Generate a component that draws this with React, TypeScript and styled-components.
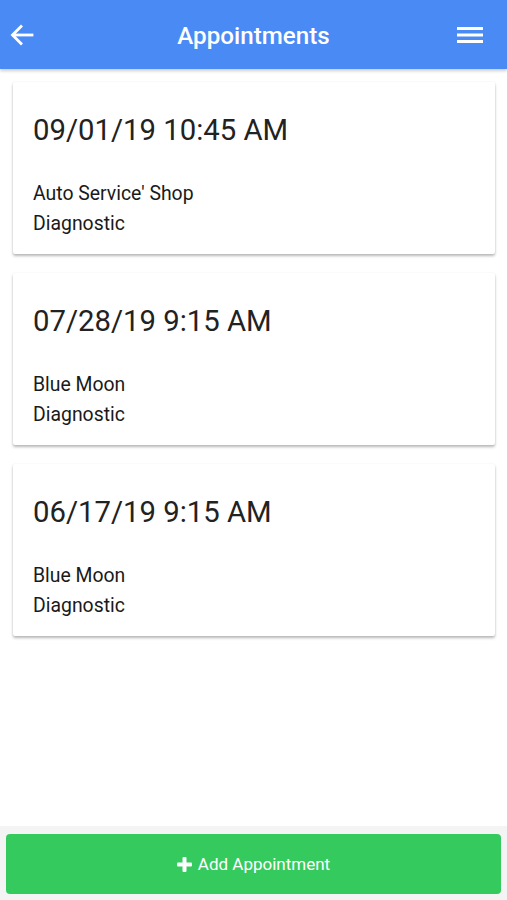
import styled, { createGlobalStyle } from "styled-components";

const GlobalStyle = createGlobalStyle`
  * { box-sizing: border-box; }
  html, body { margin: 0; padding: 0; }
  body {
    font-family: Roboto, "Noto Sans", "Liberation Sans", sans-serif;
    background: #fff;
  }
`;

const Screen = styled.div`
  height: 100vh;
  display: flex;
  flex-direction: column;
  background: #fff;
`;

const Header = styled.header`
  height: 69px;
  flex-shrink: 0;
  background: #4a8af5;
  display: flex;
  align-items: center;
  justify-content: space-between;
  padding: 2px 24px 0 10px;
  box-shadow: 0 2px 3px rgba(0, 0, 0, 0.2);
  position: relative;
  z-index: 1;
`;

const Title = styled.h1`
  margin: 0;
  flex: 1;
  text-align: center;
  color: #fff;
  font-size: 24.2px;
  font-weight: 500;
  padding-left: 16px;
`;

const IconButton = styled.button`
  background: none;
  border: 0;
  padding: 0;
  display: flex;
  align-items: center;
  justify-content: center;
  margin-top: -2px;
`;

const List = styled.main`
  flex: 1;
  display: flex;
  flex-direction: column;
  gap: 19px;
  padding: 13px 12px 13px 13px;
  overflow: hidden;
`;

const Card = styled.div`
  background: #fff;
  border-radius: 2px;
  padding: 29px 20px 15px;
  box-shadow: 0 2px 3px rgba(0, 0, 0, 0.28), 0 0 2px rgba(0, 0, 0, 0.06);
`;

const DateText = styled.div`
  font-size: 29.3px;
  line-height: 38px;
  color: #222;
  margin-bottom: 30px;
`;

const Line = styled.div`
  font-size: 19.4px;
  line-height: 30px;
  color: #1a1a1a;
`;

const Footer = styled.footer`
  flex-shrink: 0;
  background: #f4f4f4;
  padding: 8px 6px 6px;
`;

const AddButton = styled.button`
  width: 100%;
  height: 60px;
  border: 0;
  border-radius: 4px;
  background: #35ca5e;
  color: #fff;
  font-family: Roboto, "Noto Sans", sans-serif;
  font-size: 17px;
  display: flex;
  align-items: center;
  justify-content: center;
  gap: 6px;
`;

const appointments = [
  { id: 1, date: "09/01/19 10:45 AM", shop: "Auto Service' Shop", service: "Diagnostic" },
  { id: 2, date: "07/28/19 9:15 AM", shop: "Blue Moon", service: "Diagnostic" },
  { id: 3, date: "06/17/19 9:15 AM", shop: "Blue Moon", service: "Diagnostic" },
];

function BackIcon() {
  return (
    <svg width="24" height="22" viewBox="0 0 24 22" fill="none" stroke="#fff" strokeWidth="2.8" strokeLinecap="square">
      <path d="M22 11H3.5" />
      <path d="M11 2.5L2.5 11l8.5 8.5" />
    </svg>
  );
}

function MenuIcon() {
  return (
    <svg width="26" height="18" viewBox="0 0 26 18" fill="#fff">
      <rect x="0" y="1" width="26" height="3" />
      <rect x="0" y="7.5" width="26" height="3" />
      <rect x="0" y="14" width="26" height="3" />
    </svg>
  );
}

function PlusIcon() {
  return (
    <svg width="15" height="15" viewBox="0 0 15 15" fill="#fff">
      <rect x="5.5" y="0" width="4" height="15" rx="1" />
      <rect x="0" y="5.5" width="15" height="4" rx="1" />
    </svg>
  );
}

export default function App() {
  return (
    <>
      <GlobalStyle />
      <Screen>
        <Header>
          <IconButton>
            <BackIcon />
          </IconButton>
          <Title>Appointments</Title>
          <IconButton>
            <MenuIcon />
          </IconButton>
        </Header>
        <List>
          {appointments.map(a => (
            <Card key={a.id}>
              <DateText>{a.date}</DateText>
              <Line>{a.shop}</Line>
              <Line>{a.service}</Line>
            </Card>
          ))}
        </List>
        <Footer>
          <AddButton>
            <PlusIcon />
            Add Appointment
          </AddButton>
        </Footer>
      </Screen>
    </>
  );
}
